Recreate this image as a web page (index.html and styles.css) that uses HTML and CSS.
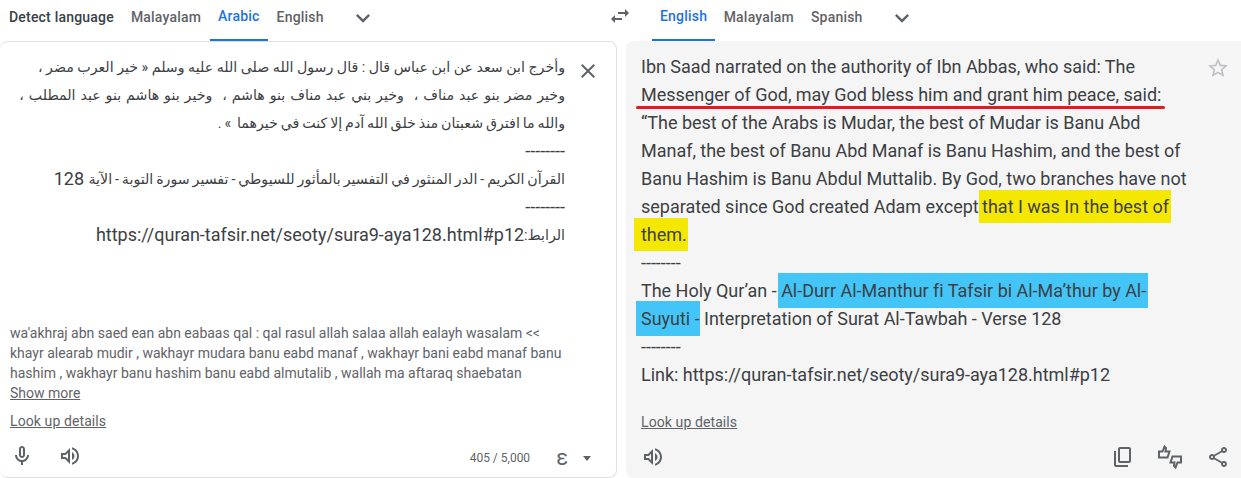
FILE: index.html
```html
<!DOCTYPE html>
<html lang="en">
<head>
    <meta charset="UTF-8">
    <meta name="viewport" content="width=device-width, initial-scale=1.0">
    <title>Translate</title>
    <link rel="stylesheet" href="styles.css">
</head>
<body>

    <div class="lang-bar">
        <div class="lang-side lang-source">
            <span class="tab tab-detect">Detect language</span>
            <span class="tab">Malayalam</span>
            <span class="tab active">Arabic</span>
            <span class="tab">English</span>
            <svg class="icon chevron" viewBox="0 0 24 24"><path d="M7.41 8.59L12 13.17l4.59-4.58L18 10l-6 6-6-6z"/></svg>
        </div>
        <svg class="icon swap" viewBox="0 0 24 24"><path d="M6.99 11L3 15l3.99 4v-3H14v-2H6.99v-3zM21 9l-3.99-4v3H10v2h7.01v3L21 9z"/></svg>
        <div class="lang-side lang-target">
            <span class="tab active">English</span>
            <span class="tab">Malayalam</span>
            <span class="tab">Spanish</span>
            <svg class="icon chevron" viewBox="0 0 24 24"><path d="M7.41 8.59L12 13.17l4.59-4.58L18 10l-6 6-6-6z"/></svg>
        </div>
    </div>

    <div class="panels">
        <div class="panel panel-source">
            <div class="source-row">
                <div class="source-text" dir="rtl" lang="ar">
                    <span class="ar">وأخرج ابن سعد عن ابن عباس قال : قال رسول الله صلى الله عليه وسلم « خير العرب مضر ،</span><br>
                    <span class="ar ar-wide">وخير مضر بنو عبد مناف ،&nbsp; وخير بني عبد مناف بنو هاشم ،&nbsp; وخير بنو هاشم بنو عبد المطلب ،</span><br>
                    <span class="ar ar-tight">والله ما افترق شعبتان منذ خلق الله آدم إلا كنت في خيرهما&nbsp; » .</span><br>
                    --------<br>
                    <span class="ar ar-tight">القرآن الكريم - الدر المنثور في التفسير بالمأثور للسيوطي - تفسير سورة التوبة - الآية</span> 128<br>
                    --------<br>
                    <span class="ar">الرابط:</span>https://quran-tafsir.net/seoty/sura9-aya128.html#p12
                </div>
                <svg class="icon close" viewBox="0 0 24 24"><path d="M19 6.41L17.59 5 12 10.59 6.41 5 5 6.41 10.59 12 5 17.59 6.41 19 12 13.41 17.59 19 19 17.59 13.41 12z"/></svg>
            </div>
            <div class="translit">
                wa'akhraj abn saed ean abn eabaas qal : qal rasul allah salaa allah ealayh wasalam &lt;&lt;<br>
                khayr alearab mudir , wakhayr mudara banu eabd manaf , wakhayr bani eabd manaf banu<br>
                hashim , wakhayr banu hashim banu eabd almutalib , wallah ma aftaraq shaebatan<br>
                <a class="link">Show more</a>
            </div>
            <a class="link lookup">Look up details</a>
            <div class="toolbar">
                <svg class="icon tool" viewBox="0 0 24 24"><path d="M12 14c1.66 0 3-1.34 3-3V5c0-1.66-1.34-3-3-3S9 3.34 9 5v6c0 1.66 1.34 3 3 3zm-1-9c0-.55.45-1 1-1s1 .45 1 1v6c0 .55-.45 1-1 1s-1-.45-1-1V5zm6 6c0 2.76-2.24 5-5 5s-5-2.24-5-5H5c0 3.53 2.61 6.43 6 6.92V21h2v-3.08c3.39-.49 6-3.39 6-6.92h-2z"/></svg>
                <svg class="icon tool" viewBox="0 0 24 24"><path d="M3 9v6h4l5 5V4L7 9H3zm7-.17v6.34L7.83 13H5v-2h2.83L10 8.83zM16.5 12c0-1.77-1.02-3.29-2.5-4.03v8.05c1.48-.73 2.5-2.25 2.5-4.02zM14 3.23v2.06c2.89.86 5 3.54 5 6.71s-2.11 5.85-5 6.71v2.06c4.01-.91 7-4.49 7-8.77 0-4.28-2.99-7.86-7-8.77z"/></svg>
                <span class="count">405 / 5,000</span>
                <span class="keyboard">ε</span>
                <span class="caret"></span>
            </div>
        </div>

        <div class="panel panel-target">
            <svg class="icon star" viewBox="0 0 24 24"><path d="M22 9.24l-7.19-.62L12 2 9.19 8.63 2 9.24l5.46 4.73L5.82 21 12 17.27 18.18 21l-1.63-7.03L22 9.24zM12 15.4l-3.76 2.27 1-4.28-3.32-2.88 4.38-.38L12 6.1l1.71 4.04 4.38.38-3.32 2.88 1 4.28L12 15.4z"/></svg>
            <div class="target-text">
                Ibn Saad narrated on the authority of Ibn Abbas, who said: The<br>
                <span class="red-line">Messenger of God, may God bless him and grant him peace, said:</span><br>
                “The best of the Arabs is Mudar, the best of Mudar is Banu Abd<br>
                Manaf, the best of Banu Abd Manaf is Banu Hashim, and the best of<br>
                Banu Hashim is Banu Abdul Muttalib. By God, two branches have not<br>
                separated since God created Adam except <span class="mark yellow yellow-a">that I was In the best of</span><br>
                <span class="mark yellow yellow-b">them.</span><br>
                --------<br>
                The Holy Qur’an - <span class="mark blue blue-a">Al-Durr Al-Manthur fi Tafsir bi Al-Ma’thur by Al-</span><br>
                <span class="mark blue blue-b">Suyuti -</span> Interpretation of Surat Al-Tawbah - Verse 128<br>
                --------<br>
                Link: https://quran-tafsir.net/seoty/sura9-aya128.html#p12
            </div>
            <a class="link lookup">Look up details</a>
            <div class="toolbar">
                <svg class="icon tool" viewBox="0 0 24 24"><path d="M3 9v6h4l5 5V4L7 9H3zm7-.17v6.34L7.83 13H5v-2h2.83L10 8.83zM16.5 12c0-1.77-1.02-3.29-2.5-4.03v8.05c1.48-.73 2.5-2.25 2.5-4.02zM14 3.23v2.06c2.89.86 5 3.54 5 6.71s-2.11 5.85-5 6.71v2.06c4.01-.91 7-4.49 7-8.77 0-4.28-2.99-7.86-7-8.77z"/></svg>
                <svg class="icon tool tool-copy" viewBox="0 0 24 24"><path d="M19 2h-9c-1.1 0-2 .9-2 2v12c0 1.1.9 2 2 2h9c1.1 0 2-.9 2-2V4c0-1.1-.9-2-2-2zm0 14h-9V4h9v12zM4 6v14c0 1.1.9 2 2 2h12v-2H6V6H4z"/></svg>
                <svg class="icon tool tool-feedback" viewBox="0 0 24 24"><path class="outline" d="M1 6.500h3.500l2-5L8 3l-.5 3.500h4L9.500 12.500H1z"/><path class="outline" d="M23 17.500h-3.500l-2 5L16 21l.5-3.500h-4l2-6H23z"/></svg>
                <svg class="icon tool tool-share" viewBox="0 0 24 24"><path d="M18 16.08c-.76 0-1.44.3-1.96.77L8.91 12.7c.05-.23.09-.46.09-.7s-.04-.47-.09-.7l7.05-4.11c.54.5 1.25.81 2.04.81 1.66 0 3-1.34 3-3s-1.34-3-3-3-3 1.34-3 3c0 .24.04.47.09.7L8.04 9.81C7.5 9.31 6.79 9 6 9c-1.66 0-3 1.34-3 3s1.34 3 3 3c.79 0 1.5-.31 2.04-.81l7.12 4.16c-.05.21-.08.43-.08.65 0 1.61 1.31 2.92 2.92 2.92s2.92-1.31 2.92-2.92-1.31-2.92-2.92-2.92zM18 4c.55 0 1 .45 1 1s-.45 1-1 1-1-.45-1-1 .45-1 1-1zM6 13c-.55 0-1-.45-1-1s.45-1 1-1 1 .45 1 1-.45 1-1 1zm12 7.02c-.55 0-1-.45-1-1s.45-1 1-1 1 .45 1 1-.45 1-1 1z"/></svg>
            </div>
        </div>
    </div>

</body>
</html>
```

FILE: styles.css
```css
body {
    font-family: Roboto, "DejaVu Sans", sans-serif;
    margin: 0;
    height: 478px;
    overflow: hidden;
    background-color: #fff;
    color: #3c4043;
}
.icon {
    display: block;
    flex: none;
    fill: #5f6368;
}
.lang-bar {
    display: flex;
    align-items: center;
    height: 41px;
}
.lang-side {
    display: flex;
    align-items: center;
    height: 41px;
}
.lang-source {
    width: 608px;
    padding-left: 0.5px;
    box-sizing: border-box;
}
.lang-target {
    margin-left: 20px;
}
.tab {
    height: 39px;
    line-height: 32px;
    padding: 0 8.5px;
    font-size: 14px;
    font-weight: 500;
    letter-spacing: 0.2px;
    color: #5f6368;
    white-space: nowrap;
}
.tab.active {
    color: #1a73e8;
    border-bottom: 2px solid #1a73e8;
}
.lang-target .tab.active {
    padding: 0 8px;
}
.tab-detect {
    color: #3c4043;
}
.chevron {
    width: 28px;
    height: 28px;
    margin: -5px 0 0 17px;
    fill: #5f6368;
}
.swap {
    width: 24px;
    height: 24px;
    margin-top: -9px;
}
.panels {
    display: flex;
    gap: 9px;
    height: 437px;
}
.panel {
    display: flex;
    flex-direction: column;
    box-sizing: border-box;
    position: relative;
}
.panel-source {
    width: 617px;
    border: 1px solid #e0e0e0;
    border-left: none;
    border-radius: 8px;
}
.panel-target {
    flex: 1;
    background-color: #f5f5f5;
    border-radius: 8px 0 0 8px;
}
.source-row {
    display: flex;
    height: 281px;
    padding-top: 11px;
    box-sizing: border-box;
}
.source-text {
    width: 565px;
    font-size: 18px;
    line-height: 28px;
    color: #3c4043;
    white-space: nowrap;
}
.ar {
    font-size: 14.2px;
    line-height: 1;
    vertical-align: 1px;
}
.ar-wide {
    word-spacing: 1.4px;
}
.ar-tight {
    word-spacing: -0.6px;
}
.close {
    width: 24px;
    height: 24px;
    margin: 6px 0 0 11px;
}
.translit {
    padding-left: 10px;
    font-size: 14px;
    line-height: 20px;
    color: #5f6368;
    white-space: nowrap;
}
.link {
    color: #5f6368;
    font-size: 14px;
    text-decoration: underline;
}
.lookup {
    display: block;
    margin-top: 8px;
    line-height: 20px;
    letter-spacing: 0.1px;
}
.panel-source .lookup {
    padding-left: 10px;
}
.panel-source .toolbar {
    padding-left: 10px;
}
.toolbar {
    display: flex;
    align-items: center;
    margin-top: auto;
    height: 42px;
    gap: 24px;
}
.tool {
    width: 24px;
    height: 24px;
}
.count {
    margin-left: auto;
    padding-top: 4px;
    font-size: 12px;
    color: #5f6368;
}
.keyboard {
    padding-top: 3px;
    font-size: 22px;
    color: #5f6368;
    margin-left: 2px;
}
.caret {
    width: 0;
    height: 0;
    margin: 4px 25px 0 -9px;
    border: 4px solid transparent;
    border-top: 5px solid #5f6368;
    border-bottom: none;
}
.target-text {
    padding: 12px 0 0 15px;
    font-size: 18px;
    line-height: 28px;
    letter-spacing: -0.02px;
    white-space: nowrap;
}
.red-line {
    position: relative;
}
.red-line::after {
    content: "";
    position: absolute;
    left: -5px;
    right: -4px;
    bottom: -4px;
    height: 3px;
    border-radius: 2px;
    background-color: #e21b1b;
}
.star {
    position: absolute;
    top: 15px;
    right: 11px;
    width: 24px;
    height: 24px;
    fill: #bdc1c6;
}
.mark {
    padding: 6px 0;
}
.yellow {
    background-color: #f5e800;
}
.blue {
    background-color: #43c6f7;
}
.yellow-a {
    margin-left: -4px;
    padding-left: 3px;
    padding-right: 2px;
}
.yellow-b {
    margin-left: -7px;
    padding-left: 7px;
    padding-right: 1px;
}
.blue-a {
    margin-left: -3px;
    padding: 7px 2px 7px 3px;
}
.blue-b {
    margin-left: -5px;
    padding: 7px 0 7px 5px;
}
.panel-target .lookup {
    margin-top: 23px;
    padding-left: 15px;
}
.panel-target .toolbar {
    padding: 0 11px 0 15px;
}
.tool-copy {
    margin-left: auto;
}
.tool-feedback .outline {
    fill: none;
    stroke: #5f6368;
    stroke-width: 2;
}
```
